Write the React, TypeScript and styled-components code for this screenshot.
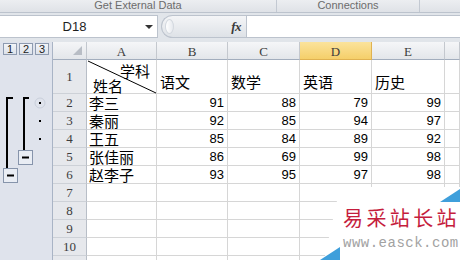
import React from "react";
import styled, { createGlobalStyle, css } from "styled-components";

const GlobalStyle = createGlobalStyle`
  *, *::before, *::after { box-sizing: border-box; }
  html, body { margin: 0; padding: 0; background: #fff; }
  body {
    width: 460px;
    height: 260px;
    overflow: hidden;
    font-family: "Liberation Sans", Arial, sans-serif;
  }
`;

const Screen = styled.div`
  width: 460px;
  height: 260px;
  display: flex;
  flex-direction: column;
  overflow: hidden;
  background: #e1e5ea;
`;

const RibbonStrip = styled.div`
  height: 13px;
  flex: none;
  display: flex;
  background: linear-gradient(#eceef1, #dfe2e7);
  border-bottom: 1px solid #bcc3cd;
`;

const RibbonGroup = styled.div<{ $w?: number }>`
  ${(p) =>
    p.$w
      ? css`
          width: ${p.$w}px;
          flex: none;
          border-right: 1px solid #c3c9d2;
        `
      : css`
          flex: 1;
        `}
  font-family: "Liberation Sans", Arial, sans-serif;
  font-size: 11px;
  line-height: 10px;
  color: #6c6c6c;
  text-align: center;
  overflow: hidden;
  white-space: nowrap;
`;

const FormulaBar = styled.div`
  height: 29px;
  flex: none;
  display: flex;
  align-items: stretch;
  padding: 2px 0 4px;
`;

const NameBox = styled.div`
  width: 158px;
  flex: none;
  display: flex;
  align-items: center;
  background: #fff;
  border: 1px solid #bcc3cd;
  border-left: none;
`;

const NameText = styled.div`
  flex: 1;
  text-align: center;
  font-size: 13px;
  color: #1e1e1e;
  padding-left: 4px;
`;

const DropArrow = styled.div`
  width: 0;
  height: 0;
  margin-right: 4px;
  border-left: 4px solid transparent;
  border-right: 4px solid transparent;
  border-top: 4px solid #333;
`;

const FxPill = styled.div`
  width: 85px;
  flex: none;
  margin-left: 3px;
  display: flex;
  align-items: center;
  justify-content: space-between;
  border: 1px solid #bcc3cd;
  border-right: none;
  border-radius: 12px 0 0 12px;
  background: linear-gradient(#f4f5f7, #dee2e7);
`;

const Knob = styled.div`
  width: 9px;
  height: 15px;
  margin-left: 3px;
  border-radius: 50%;
  background: linear-gradient(90deg, #ffffff, #e6e9ee);
  border: 1px solid #d3d8df;
`;

const FxLabel = styled.div`
  font-family: "Liberation Serif", "Times New Roman", serif;
  font-style: italic;
  font-weight: bold;
  font-size: 13px;
  color: #3a3a3a;
  margin-right: 5px;
  letter-spacing: -0.5px;
`;

const FormulaInput = styled.div`
  flex: 1;
  background: #fff;
  border: 1px solid #bcc3cd;
  border-right: none;
`;

const Sheet = styled.div`
  position: relative;
  flex: 1;
  display: grid;
  grid-template-columns: 53px 34px 70px 71px 72px 72px 73px 1fr;
  grid-template-rows: 18px 34px repeat(10, 18px);
  background: #fff;
  overflow: hidden;
`;

const OutlineHead = styled.div`
  display: flex;
  gap: 2px;
  padding: 1px 0 0 3px;
  background: #dfe3ec;
  border-right: 1px solid #a9b4c5;
`;

const LevelButton = styled.div`
  width: 14px;
  height: 12px;
  border: 1px solid #8e9bb0;
  background: linear-gradient(#f3f5f8, #dde2ea);
  font-family: "Liberation Sans", Arial, sans-serif;
  font-size: 11px;
  line-height: 10px;
  color: #222;
  text-align: center;
`;

const OutlineBody = styled.div`
  grid-column: 1;
  grid-row: 2 / -1;
  background: #dfe3ec;
  border-right: 1px solid #a9b4c5;
`;

const headerFace = css`
  font-family: "Liberation Serif", "Times New Roman", serif;
  font-size: 13px;
  color: #3c3c3c;
  display: flex;
  align-items: center;
  justify-content: center;
`;

const Corner = styled.div`
  position: relative;
  background: linear-gradient(#f4f5f7, #e3e6ea);
  border-right: 1px solid #c2c7ce;
  border-bottom: 1px solid #a2adbd;
  &::after {
    content: "";
    position: absolute;
    right: 4px;
    bottom: 4px;
    width: 9px;
    height: 9px;
    background: #b8bdc5;
    clip-path: polygon(100% 0, 100% 100%, 0 100%);
  }
`;

const ColHeader = styled.div<{ $active?: boolean }>`
  ${headerFace}
  padding-top: 2px;
  border-right: 1px solid ${(p) => (p.$active ? "#e0b251" : "#c4c8ce")};
  border-bottom: 1px solid ${(p) => (p.$active ? "#e0b251" : "#a2adbd")};
  background: ${(p) =>
    p.$active
      ? "linear-gradient(#fbe39c, #f5cf6a)"
      : "linear-gradient(#f5f6f8, #e3e6ea)"};
`;

const RowHeader = styled.div`
  ${headerFace}
  padding-top: 1px;
  background: #e6e8ec;
  border-right: 1px solid #b8bec7;
  border-bottom: 1px solid #cdd1d7;
`;

const Cell = styled.div<{ $align?: "left" | "right"; $cjk?: boolean; $bottom?: boolean }>`
  display: flex;
  align-items: ${(p) => (p.$bottom ? "flex-end" : "center")};
  justify-content: ${(p) => (p.$align === "right" ? "flex-end" : "flex-start")};
  padding: ${(p) => (p.$bottom ? "0 3px 3px 3px" : "0 3px 0 2px")};
  border-right: 1px solid #d6d6d6;
  border-bottom: 1px solid #d6d6d6;
  white-space: nowrap;
  overflow: hidden;
  color: #000;
  font-family: ${(p) =>
    p.$cjk
      ? '"Noto Sans CJK SC", "Noto Sans", sans-serif'
      : '"Liberation Sans", Arial, sans-serif'};
  font-size: ${(p) => (p.$cjk ? "15px" : "13px")};
  line-height: ${(p) => (p.$cjk ? "17px" : "18px")};
`;

const DiagonalCell = styled.div`
  position: relative;
  display: flex;
  flex-direction: column;
  justify-content: flex-end;
  padding: 0 0 0 0;
  border-right: 1px solid #d6d6d6;
  border-bottom: 1px solid #d6d6d6;
  font-family: "Noto Sans CJK SC", "Noto Sans", sans-serif;
  font-size: 15px;
  line-height: 15px;
  color: #000;
  & > svg {
    position: absolute;
    inset: 0;
  }
`;

const DiagLine = styled.div<{ $side: "left" | "right" }>`
  text-align: ${(p) => p.$side};
  padding: ${(p) => (p.$side === "right" ? "0 6px 0 0" : "0 0 0 6px")};
`;

const Watermark = styled.div`
  position: absolute;
  left: 318px;
  top: 145px;
  width: 142px;
  height: 73px;
  & > svg {
    position: absolute;
    inset: 0;
  }
`;

const WatermarkTitle = styled.div`
  position: relative;
  margin: 19px 0 0 25px;
  font-family: "Noto Sans CJK SC", sans-serif;
  font-size: 20px;
  line-height: 24px;
  letter-spacing: 3.4px;
  color: #c51d3d;
  white-space: nowrap;
`;

const WatermarkUrl = styled.div`
  position: relative;
  margin: 6px 0 0 25px;
  font-family: "Liberation Mono", "Courier New", monospace;
  font-size: 14px;
  line-height: 14px;
  letter-spacing: 0.5px;
  color: #a2a2a2;
  white-space: nowrap;
`;

const columns = ["A", "B", "C", "D", "E", ""];
const subjects = ["语文", "数学", "英语", "历史"];
const students: [string, number[]][] = [
  ["李三", [91, 88, 79, 99]],
  ["秦丽", [92, 85, 94, 97]],
  ["王五", [85, 84, 89, 92]],
  ["张佳丽", [86, 69, 99, 98]],
  ["赵李子", [93, 95, 97, 98]],
];

function OutlineSymbols() {
  return (
    <svg width="52" height="200" viewBox="0 0 52 200">
      <rect x="6" y="37" width="2" height="71" fill="#000" />
      <rect x="6" y="37" width="7" height="2" fill="#000" />
      <rect x="23" y="37" width="2" height="53" fill="#000" />
      <rect x="23" y="37" width="6" height="2" fill="#000" />
      <circle cx="40" cy="43" r="5" fill="none" stroke="#c9cfdb" />
      {[42, 60, 78].map((y) => (
        <rect key={y} x="39" y={y} width="2" height="2" fill="#000" />
      ))}
      <rect x="18.5" y="90.5" width="14" height="14" fill="#e9edf4" stroke="#8694ab" />
      <rect x="22" y="96.5" width="7" height="2" fill="#000" />
      <rect x="3.5" y="108.5" width="14" height="14" fill="#e9edf4" stroke="#8694ab" />
      <rect x="7" y="114.5" width="7" height="2" fill="#000" />
    </svg>
  );
}

export default function App() {
  const emptyRows = [7, 8, 9, 10, 11];
  return (
    <>
      <GlobalStyle />
      <Screen>
        <RibbonStrip>
          <RibbonGroup $w={277}>Get External Data</RibbonGroup>
          <RibbonGroup $w={143}>Connections</RibbonGroup>
          <RibbonGroup />
        </RibbonStrip>

        <FormulaBar>
          <NameBox>
            <NameText>D18</NameText>
            <DropArrow />
          </NameBox>
          <FxPill>
            <Knob />
            <FxLabel>fx</FxLabel>
          </FxPill>
          <FormulaInput />
        </FormulaBar>

        <Sheet>
          <OutlineHead>
            <LevelButton>1</LevelButton>
            <LevelButton>2</LevelButton>
            <LevelButton>3</LevelButton>
          </OutlineHead>
          <Corner />
          {columns.map((c, i) => (
            <ColHeader key={i} $active={c === "D"}>
              {c}
            </ColHeader>
          ))}

          <OutlineBody>
            <OutlineSymbols />
          </OutlineBody>

          <RowHeader>1</RowHeader>
          <DiagonalCell>
            <svg width="70" height="34" viewBox="0 0 70 34">
              <line x1="1" y1="1" x2="69" y2="33" stroke="#000" strokeWidth="1" />
            </svg>
            <DiagLine $side="right">学科</DiagLine>
            <DiagLine $side="left">姓名</DiagLine>
          </DiagonalCell>
          {subjects.map((s) => (
            <Cell key={s} $cjk $bottom>
              {s}
            </Cell>
          ))}
          <Cell />

          {students.map(([name, scores], r) => (
            <React.Fragment key={name}>
              <RowHeader>{r + 2}</RowHeader>
              <Cell $cjk>{name}</Cell>
              {scores.map((v, i) => (
                <Cell key={i} $align="right">
                  {v}
                </Cell>
              ))}
              <Cell />
            </React.Fragment>
          ))}

          {emptyRows.map((n) => (
            <React.Fragment key={n}>
              <RowHeader>{n}</RowHeader>
              {columns.map((_, i) => (
                <Cell key={i} />
              ))}
            </React.Fragment>
          ))}

          <Watermark>
            <svg width="142" height="73" viewBox="0 0 142 73">
              <polygon points="22,0 142,0 142,73 6,73" fill="#fff" />
              <polygon points="122,15 142,2 142,15" fill="#3f9fdb" />
              <polygon points="2,73 22,60 22,73" fill="#3f9fdb" />
            </svg>
            <WatermarkTitle>易采站长站</WatermarkTitle>
            <WatermarkUrl>www.easck.com</WatermarkUrl>
          </Watermark>
        </Sheet>
      </Screen>
    </>
  );
}
